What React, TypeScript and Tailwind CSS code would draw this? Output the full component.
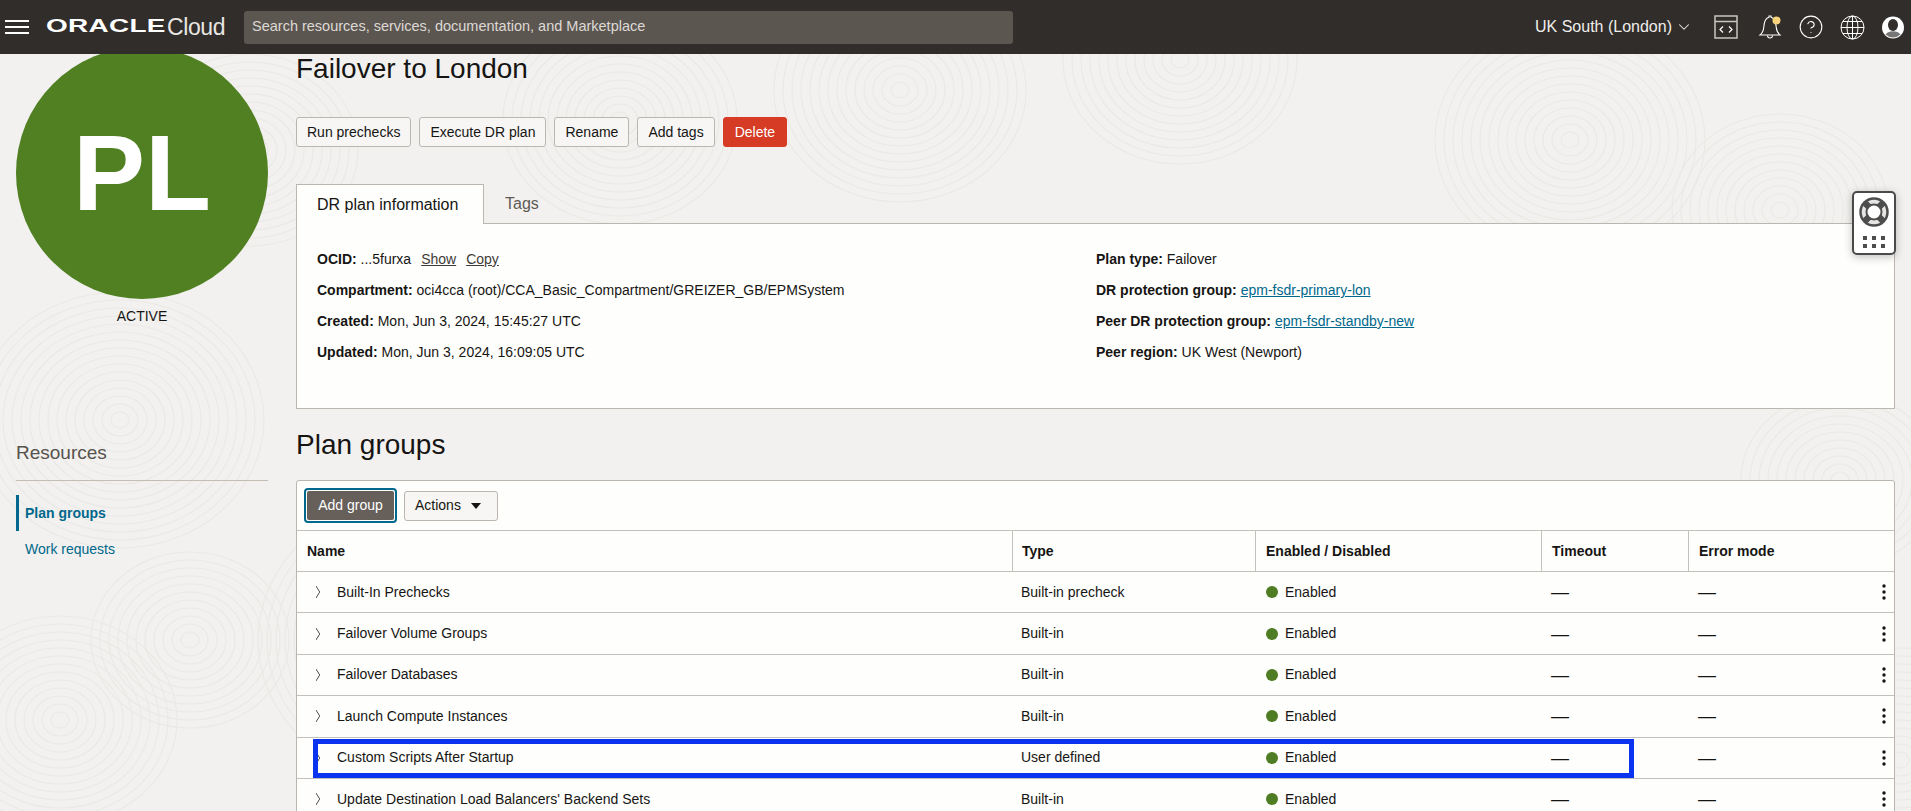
import React from "react";
import { CircleHelp, ChevronDown, ChevronRight } from "lucide-react";

const swirls = [
  [120, 420, 150], [250, 150, 110], [420, 640, 170], [620, 120, 120], [900, 90, 130], [1180, 60, 120],
  [1570, 140, 140], [1780, 210, 110], [60, 720, 120], [1840, 480, 100], [1900, 760, 130], [190, 640, 100],
];

function Texture() {
  return (
    <svg className="absolute inset-0 w-full h-full pointer-events-none" viewBox="0 0 1911 811" aria-hidden="true">
      {swirls.map(([cx, cy, r], i) => (
        <g key={i} fill="none" stroke="#eae9e6" strokeWidth="1.2">
          {Array.from({ length: Math.floor(r / 9) }).map((_, k) => (
            <ellipse key={k} cx={cx} cy={cy} rx={(k + 1) * 9} ry={(k + 1) * 8} />
          ))}
        </g>
      ))}
    </svg>
  );
}

function Btn({ children, danger }: { children: React.ReactNode; danger?: boolean }) {
  return danger ? (
    <button className="h-[30px] px-[11px] rounded-[3px] bg-[#d63b25] text-[#fff] text-[14px] border border-[#d63b25]">{children}</button>
  ) : (
    <button className="h-[30px] px-[10px] rounded-[3px] bg-[#f7f6f4] text-[#161513] text-[14px] border border-[#bcb6b1]">{children}</button>
  );
}

function Kv({ k, children }: { k: string; children: React.ReactNode }) {
  return (
    <div className="h-[31px] leading-[31px] text-[14px] text-[#161513] whitespace-nowrap">
      <span className="font-bold">{k}</span> {children}
    </div>
  );
}

function Link({ children }: { children: React.ReactNode }) {
  return <a className="text-[#00688c] underline">{children}</a>;
}

const rows = [
  ["Built-In Prechecks", "Built-in precheck"],
  ["Failover Volume Groups", "Built-in"],
  ["Failover Databases", "Built-in"],
  ["Launch Compute Instances", "Built-in"],
  ["Custom Scripts After Startup", "User defined"],
  ["Update Destination Load Balancers' Backend Sets", "Built-in"],
];

const gridCols = "grid grid-cols-[715px_243px_286px_147px_1fr]";

function Row({ name, type, highlight }: { name: string; type: string; highlight?: boolean }) {
  return (
    <div className={`${gridCols} relative h-[41.4px] items-center border-b border-[#c4c0bb] text-[14px] text-[#161513]`}>
      <div className="flex items-center pl-[14px]">
        <ChevronRight className="w-[14px] h-[22px] shrink-0 text-[#161513]" strokeWidth={1.1} preserveAspectRatio="none" />
        <span className="ml-[12px] whitespace-nowrap">{name}</span>
      </div>
      <div className="pl-[9px]">{type}</div>
      <div className="flex items-center pl-[11px]">
        <span className="w-[12px] h-[12px] rounded-full bg-[#4f7d23]" />
        <span className="ml-[7px]">Enabled</span>
      </div>
      <div className="pl-[10px] text-[18px] leading-none">—</div>
      <div className="flex items-center justify-between pl-[10px] pr-[7px]">
        <span className="text-[18px] leading-none">—</span>
        <svg width="6" height="18" viewBox="0 0 6 18" fill="#161513">
          <circle cx="3" cy="3" r="1.7" />
          <circle cx="3" cy="9" r="1.7" />
          <circle cx="3" cy="15" r="1.7" />
        </svg>
      </div>
      {highlight && <div className="absolute left-[16px] top-[1px] w-[1321px] h-[39px] border-[5px] border-[#0a33f0]" />}
    </div>
  );
}

export default function App() {
  return (
    <div className="relative h-[811px] overflow-hidden bg-[#f2f1ef] font-['Liberation_Sans',Arial,sans-serif]">
      <Texture />
      <header className="relative z-10 h-[54px] bg-[#312d2a] flex items-center text-[#fff]">
        <svg className="ml-[5px] shrink-0" width="24" height="16" viewBox="0 0 24 16" stroke="#fff" strokeWidth="2">
          <path d="M0 2h24M0 8h24M0 14h24" />
        </svg>
        <div className="ml-[17px] w-[114px] shrink-0 overflow-visible">
          <span className="inline-block origin-left scale-x-[1.47] text-[19px] leading-none font-bold tracking-[0.2px] text-[#fff]">ORACLE</span>
        </div>
        <span className="ml-[7px] w-[58px] shrink-0 text-[23px] font-extralight tracking-[-0.4px] text-[#e8e6e3] leading-none">Cloud</span>
        <div className="ml-[19px] w-[769px] h-[33px] rounded-[3px] bg-[#5c5651] flex items-center pl-[8px] text-[14.5px] text-[#dcd9d5]">
          Search resources, services, documentation, and Marketplace
        </div>
        <div className="ml-auto flex items-center">
          <span className="text-[16px] text-[#f0eeeb] whitespace-nowrap">UK South (London)</span>
          <ChevronDown className="ml-[3px] w-[18px] h-[18px] text-[#f0eeeb]" strokeWidth={1.4} />
          <svg className="ml-[21px]" width="24" height="24" viewBox="0 0 24 24" fill="none" stroke="#c9c6c2" strokeWidth="1.5">
            <rect x="1" y="1" width="22" height="22" />
            <path d="M1 6.5h22" />
            <path d="M9 11.5l-3 3 3 3M15 11.5l3 3-3 3" stroke="#fff" strokeWidth="1.2" />
          </svg>
          <svg className="ml-[20px]" width="24" height="26" viewBox="0 0 24 26" fill="none" stroke="#fff" strokeWidth="1.1">
            <path d="M2 21c2.500-2 3.500-4 3.800-8C6.200 7 8 3.800 11 3.200V2h2v1.200c3 .6 4.800 3.800 5.200 9.800.3 4 1.300 6 3.800 8z" />
            <path d="M9.500 21.500a2.500 2.500 0 0 0 5 0" />
            <circle cx="18.500" cy="6.500" r="4" fill="#f8d37c" stroke="none" />
          </svg>
          <CircleHelp className="ml-[16px] w-[26px] h-[26px] text-[#fff]" strokeWidth={1} />
          <svg className="ml-[16px]" width="25" height="25" viewBox="0 0 25 25" fill="none" stroke="#fff" strokeWidth="1">
            <circle cx="12.500" cy="12.500" r="11.500" />
            <ellipse cx="12.500" cy="12.500" rx="5.500" ry="11.500" />
            <path d="M12.500 1v23M1 12.500h23M2.800 6.500h19.400M2.800 18.500h19.400" />
          </svg>
          <svg className="ml-[17px] mr-[7px]" width="22" height="23" viewBox="0 0 22 23">
            <circle cx="11" cy="11.500" r="11" fill="#fff" />
            <ellipse cx="11" cy="9" rx="5" ry="6" fill="#312d2a" />
            <path d="M3.500 18.500c2-2.500 4-3.200 7.500-3.200s5.500.7 7.500 3.200a11 11 0 0 1-15 0z" fill="#777" />
          </svg>
        </div>
      </header>

      <main className="relative flex">
        <aside className="w-[296px] shrink-0 pl-[16px] pr-[28px]">
          <div className="-mt-[7px] relative z-0 w-[252px] h-[252px] rounded-full bg-[#508022] flex items-center justify-center text-[#fff] text-[108px] font-bold leading-none">
            PL
          </div>
          <div className="mt-[9px] text-center text-[14px] text-[#161513] leading-[16px]">ACTIVE</div>
          <h2 className="mt-[117px] text-[19px] font-extralight text-[#57524e] leading-[24px]">Resources</h2>
          <div className="mt-[15px] border-t border-[#c4bdb6]" />
          <nav className="mt-[14px] text-[14px]">
            <div className="h-[36px] flex items-center border-l-[3px] border-[#00688c] pl-[6px] font-bold text-[#00688c]">Plan groups</div>
            <div className="h-[36px] mt-0 flex items-center pl-[9px] text-[#00688c]">Work requests</div>
          </nav>
        </aside>

        <section className="flex-1 min-w-0 pr-[16px]">
          <h1 className="mt-[-1px] text-[28px] leading-[32px] font-normal text-[#161513]">Failover to London</h1>
          <div className="mt-[32px] flex gap-[8px]">
            <Btn>Run prechecks</Btn>
            <Btn>Execute DR plan</Btn>
            <Btn>Rename</Btn>
            <Btn>Add tags</Btn>
            <Btn danger>Delete</Btn>
          </div>

          <div className="mt-[37px] flex h-[40px] relative z-[1]">
            <div className="w-[188px] h-[40px] bg-[#fefefc] border border-b-0 border-[#bcb6b1] flex items-center pl-[20px] text-[16px] text-[#161513]">DR plan information</div>
            <div className="flex-1 border-b border-[#bcb6b1] flex items-center pl-[21px] text-[16px] text-[#5f5a56]">Tags</div>
          </div>
          <div className="relative h-[185px] bg-[#fefefc] border border-t-0 border-[#bcb6b1] grid grid-cols-[779px_1fr] pl-[20px] pt-[20px]">
            <div>
              <Kv k="OCID:">
                ...5furxa<a className="ml-[10px] underline text-[#3f3b38]">Show</a>
                <a className="ml-[10px] underline text-[#3f3b38]">Copy</a>
              </Kv>
              <Kv k="Compartment:">oci4cca (root)/CCA_Basic_Compartment/GREIZER_GB/EPMSystem</Kv>
              <Kv k="Created:">Mon, Jun 3, 2024, 15:45:27 UTC</Kv>
              <Kv k="Updated:">Mon, Jun 3, 2024, 16:09:05 UTC</Kv>
            </div>
            <div>
              <Kv k="Plan type:">Failover</Kv>
              <Kv k="DR protection group:"><Link>epm-fsdr-primary-lon</Link></Kv>
              <Kv k="Peer DR protection group:"><Link>epm-fsdr-standby-new</Link></Kv>
              <Kv k="Peer region:">UK West (Newport)</Kv>
            </div>
            <div className="absolute z-10 right-[-2px] top-[-33px] w-[44px] h-[64px] bg-[#fff] border-2 border-[#4a4a4a] rounded-[5px] shadow-[0_2px_8px_rgba(0,0,0,0.25)] flex flex-col items-center">
              <svg className="mt-[3px]" width="32" height="32" viewBox="0 0 32 32" fill="none">
                <circle cx="16" cy="16" r="13.500" fill="#e6e5e3" stroke="#4d4d4d" strokeWidth="2.500" />
                <path d="M6.500 6.500l6 6M25.500 6.500l-6 6M6.500 25.500l6-6M25.500 25.500l-6-6" stroke="#4d4d4d" strokeWidth="6.500" />
                <circle cx="16" cy="16" r="7.500" fill="#fff" stroke="#4d4d4d" strokeWidth="2" />
              </svg>
              <div className="mt-[8px] grid grid-cols-3 gap-x-[5px] gap-y-[4px]">
                {[0, 1, 2, 3, 4, 5].map((i) => (
                  <span key={i} className="w-[4px] h-[4px] bg-[#4d4d4d]" />
                ))}
              </div>
            </div>
          </div>

          <h2 className="mt-[20px] text-[28px] leading-[32px] font-normal text-[#161513]">Plan groups</h2>
          <div className="mt-[19px] bg-[#fefefc] border border-[#bcb6b1] rounded-t-[3px]">
            <div className="h-[50px] flex items-center pl-[7px] gap-[7px] border-b border-[#c4c0bb]">
              <div className="rounded-[4px] border-2 border-[#00688c] p-[1px] bg-[#fff]">
                <button className="block h-[29px] w-[87px] rounded-[2px] bg-[#665f5a] text-[#fff] text-[14px]">Add group</button>
              </div>
              <button className="h-[30px] w-[94px] rounded-[3px] bg-[#f7f6f4] border border-[#bcb6b1] text-[14px] text-[#161513] flex items-center pl-[10px]">
                Actions
                <svg className="ml-[10px]" width="10" height="6" viewBox="0 0 10 6" fill="#161513"><path d="M0 0h10L5 6z" /></svg>
              </button>
            </div>
            <div className={`${gridCols} h-[41px] items-stretch border-b border-[#c4c0bb] text-[14px] font-bold text-[#161513]`}>
              <div className="flex items-center pl-[10px]">Name</div>
              <div className="flex items-center pl-[9px] border-l border-[#c4c0bb]">Type</div>
              <div className="flex items-center pl-[10px] border-l border-[#c4c0bb]">Enabled / Disabled</div>
              <div className="flex items-center pl-[10px] border-l border-[#c4c0bb]">Timeout</div>
              <div className="flex items-center pl-[10px] border-l border-[#c4c0bb]">Error mode</div>
            </div>
            {rows.map(([n, t]) => (
              <Row key={n} name={n} type={t} highlight={n.startsWith("Custom")} />
            ))}
          </div>
        </section>
      </main>
    </div>
  );
}
